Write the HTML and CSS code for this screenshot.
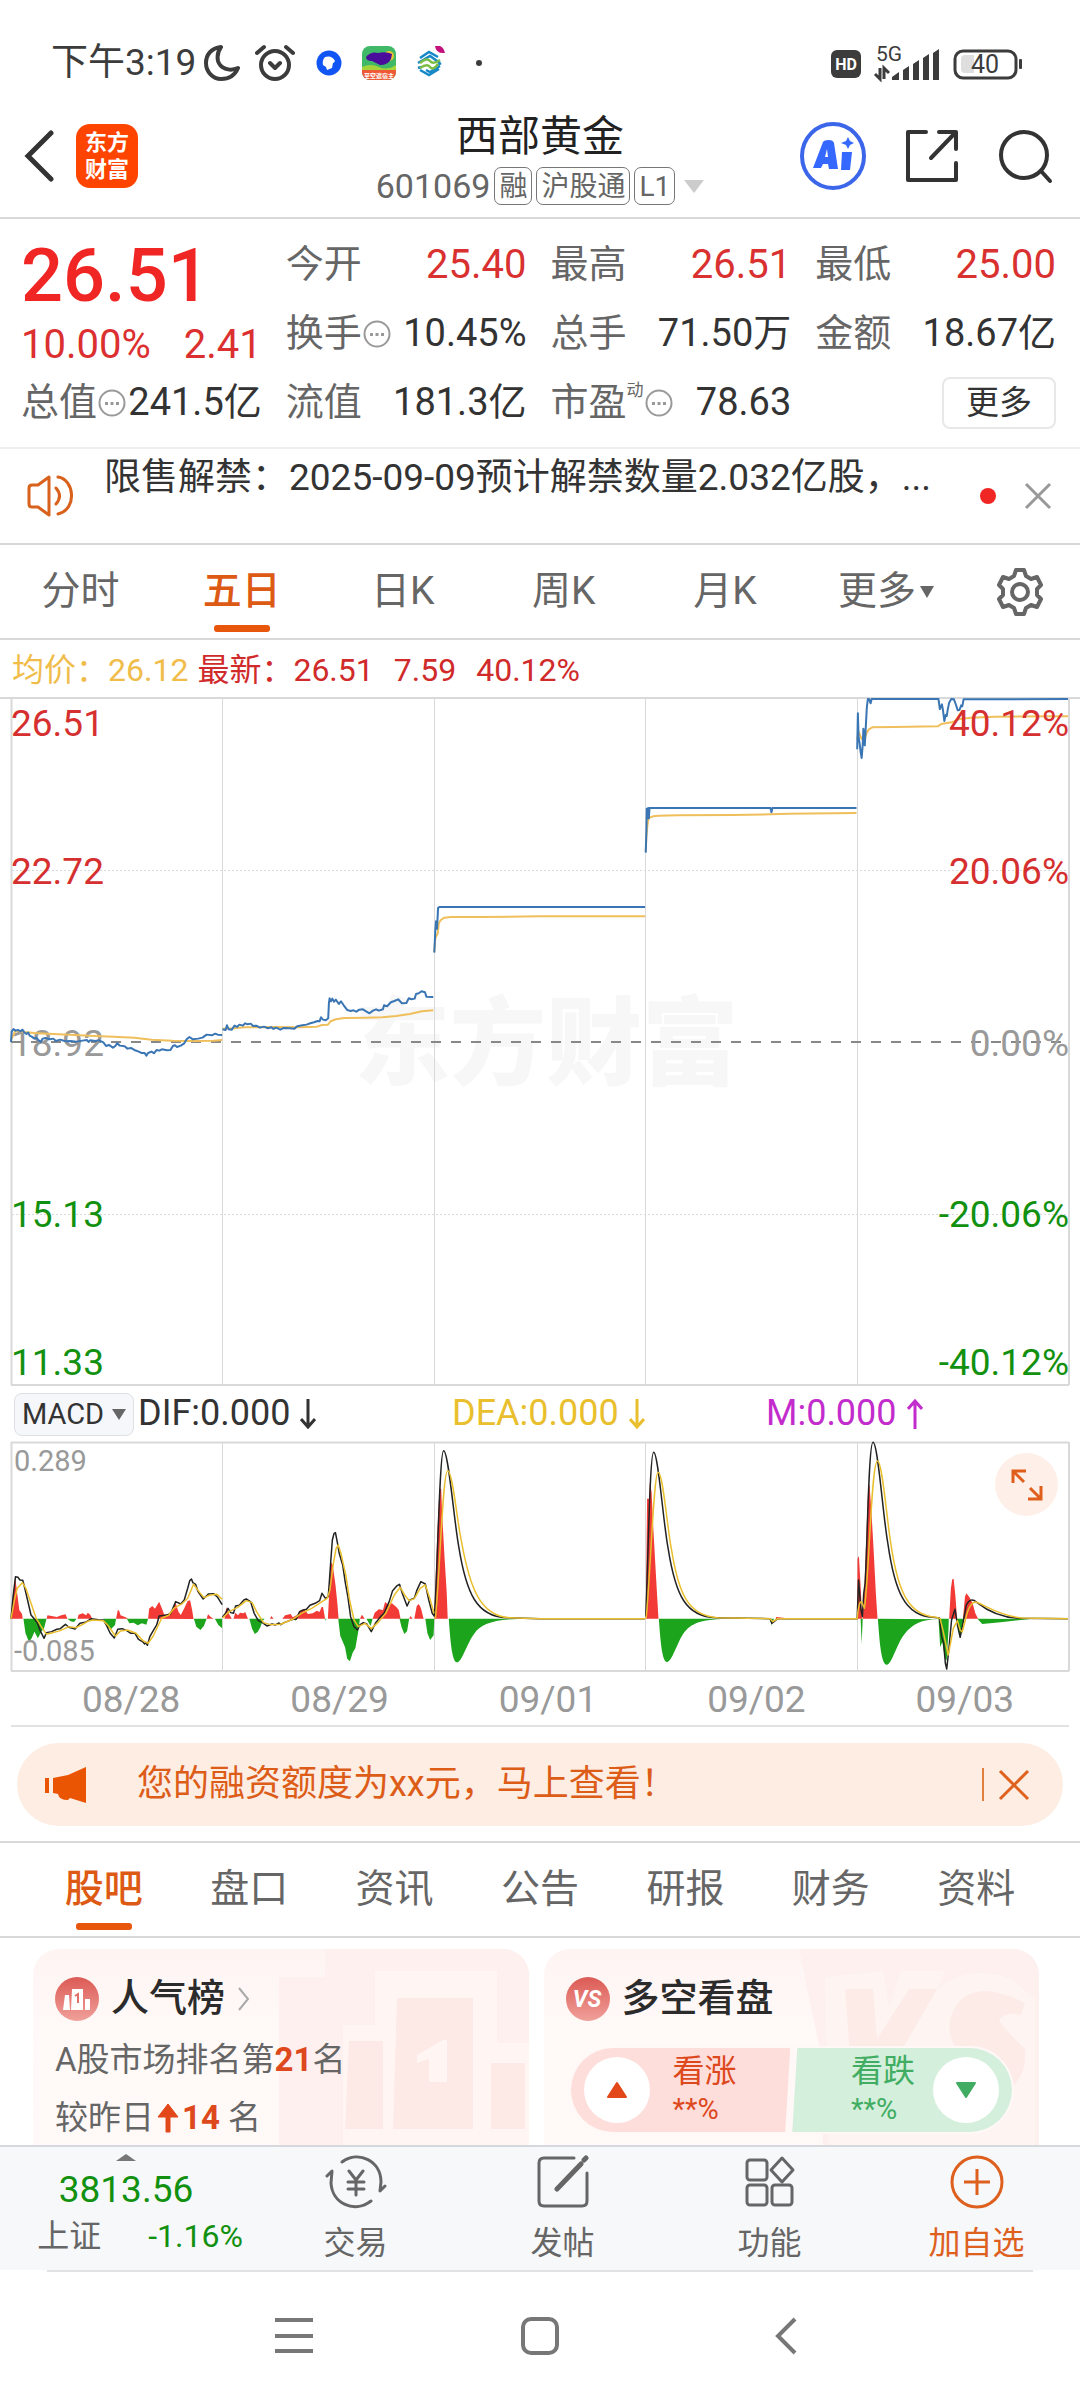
FILE: index.html
```html
<!DOCTYPE html>
<html lang="zh-CN">
<head>
<meta charset="utf-8">
<meta name="viewport" content="width=device-width, initial-scale=1">
<title>西部黄金 601069</title>
<link rel="stylesheet" href="styles.css">
</head>
<body>
<div class="app">
  <div class="status">
    <div class="status-left">
      <span class="clock">下午3:19</span>
      <svg width="36" height="38" viewBox="0 0 36 38"><path d="M17 3C7 4 2 11 2 19c0 9 7 16 15 16 8 0 14-4 17-11-9 4-18 0-20-7-1-5 0-10 3-14z" fill="none" stroke="#3c3c3c" stroke-width="4" stroke-linejoin="round"/></svg>
      <svg class="alarm" width="40" height="38" viewBox="0 0 40 38" fill="none" stroke="#3c3c3c" stroke-width="4" stroke-linecap="round" stroke-linejoin="round"><circle cx="20" cy="21" r="14"/><path d="M2 9l7-6M38 9l-7-6M15 19l5 5 5-5"/></svg>
      <svg class="app-icon" width="34" height="34" viewBox="0 0 34 34"><circle cx="17" cy="17" r="12.500" fill="#1155f5"/><path d="M13 11q7-2 10 4-1 2-2 2l-1 5-5 2-1-3-3-2q-1-5 2-8z" fill="#fff"/></svg>
      <svg class="app-icon" width="34" height="34" viewBox="0 0 34 34"><defs><clipPath id="game"><rect width="34" height="34" rx="8"/></clipPath></defs><g clip-path="url(#game)"><rect width="34" height="34" fill="#3fb868"/><path d="M0 21q9-4 17 0t17-2v6H0z" fill="#a4d33b"/><circle cx="27" cy="10" r="5" fill="#ecc431"/><path d="M4 11q5-6 12-4 8-2 14 1l-1 5q-3 6-11 6l-8-4q-6 0-6-4z" fill="#4a0c9b"/><rect y="24" width="34" height="10" fill="#ee5a35"/></g><text x="17" y="32" text-anchor="middle" font-size="6" font-weight="700" fill="#fff">至空遮宿主</text></svg>
      <svg class="app-icon" width="34" height="34" viewBox="0 0 34 34" fill="none" stroke-width="2.500"><path d="M8 12l9-6 9 5M6 17l12-7 10 7M6 22l3-1M29 17l-3 2M8 24l9 5 10-6M14 24l4 2 10-6" stroke="#1688c8"/><path d="M8 17q7-6 10-2t10-1M8 22q7-5 10-1t8-3" stroke="#7bbd45"/><path d="M23 0q8-2 10 7-9 1-10-7z" fill="#c4107b"/></svg>
      <svg class="app-icon" width="34" height="34" viewBox="0 0 34 34"><circle cx="17" cy="17" r="3" fill="#3c3c3c"/></svg>
    </div>
    <svg width="192" height="42" viewBox="831 41 192 42" role="img" aria-label="HD 5G 40%">
      <rect x="831" y="49" width="30" height="28" rx="6" fill="#3c3c3c"/>
      <text x="846" y="69" text-anchor="middle" font-size="16" font-weight="700" fill="#fff">HD</text>
      <text x="876" y="60" font-size="21" fill="#3c3c3c">5G</text>
      <path d="M880 67v11l-5-5M884 78V67l5 5" fill="none" stroke="#3c3c3c" stroke-width="3"/>
      <path d="M892 79v-3l7-5v8zM903 79V69l6-4v14zM913 79V63l6-4v20zM923 79V57l6-4v26zM933 79V52l6-4v31z" fill="#3c3c3c"/>
      <rect x="955" y="50" width="61" height="27" rx="8" fill="none" stroke="#3c3c3c" stroke-width="3"/>
      <path d="M965 54h9v18h-9q-4 0-4-4V58q0-4 4-4z" fill="#dedede"/>
      <rect x="1019" y="58" width="3" height="10" rx="1" fill="#3c3c3c"/>
      <text x="985" y="72" text-anchor="middle" font-size="25" fill="#3c3c3c">40</text>
    </svg>
  </div>

  <header class="header">
    <div class="header-side">
      <button class="plain" aria-label="返回"><svg width="30" height="52" viewBox="0 0 30 52"><path d="M27 3L4 26l23 23" fill="none" stroke="#333" stroke-width="5" stroke-linecap="round"/></svg></button>
      <a class="logo" href="#">东方<br>财富</a>
    </div>
    <div class="header-title">
      <h1>西部黄金</h1>
      <button class="plain code">601069<span class="tag">融</span><span class="tag">沪股通</span><span class="tag">L1</span><i class="caret"></i></button>
    </div>
    <div class="header-side header-actions">
      <button class="plain" aria-label="AI"><svg width="66" height="68" viewBox="0 0 66 68"><ellipse cx="33" cy="34" rx="31" ry="32" fill="none" stroke="#3c66ea" stroke-width="4"/><path d="M13 46l10-26q1-2 6-2 4 0 5 3l4 26h-9l-1-5h-5l-2 4zM25 35h3l-1-8z" fill="#3568ff" fill-rule="evenodd"/><path d="M42 30h10l-2 18h-9z" fill="#3568ff"/><path d="M48 15l2 4 4 2-4 2-2 4-2-4-5-2 5-2z" fill="#3568ff" /></svg></button>
      <button class="plain" aria-label="分享"><svg width="54" height="54" viewBox="0 0 54 54" fill="none" stroke="#333" stroke-width="4" stroke-linecap="round" stroke-linejoin="round"><path d="M21 3H3v48h48V34M34 3h17v17M51 3L26 29"/></svg></button>
      <button class="plain" aria-label="搜索"><svg width="56" height="56" viewBox="0 0 56 56" fill="none" stroke="#333" stroke-width="4" stroke-linecap="round"><circle cx="26" cy="27" r="23"/><path d="M43 43l9 10"/></svg></button>
    </div>
  </header>

  <section class="quote">
    <div class="price">
      <strong>26.51</strong>
      <div class="change"><span>10.00%</span><span>2.41</span></div>
    </div>
    <div class="pair"><span>今开</span><b class="up">25.40</b></div>
    <div class="pair"><span>最高</span><b class="up">26.51</b></div>
    <div class="pair"><span>最低</span><b class="up">25.00</b></div>
    <div class="pair"><span>换手<svg class="info"><use href="#i-dots"/></svg></span><b>10.45%</b></div>
    <div class="pair"><span>总手</span><b>71.50万</b></div>
    <div class="pair"><span>金额</span><b>18.67亿</b></div>
    <div class="pair"><span>总值<svg class="info"><use href="#i-dots"/></svg></span><b>241.5亿</b></div>
    <div class="pair"><span>流值</span><b>181.3亿</b></div>
    <div class="pair"><span>市盈<sup>动</sup><svg class="info"><use href="#i-dots"/></svg></span><b>78.63</b></div>
    <div class="pair pair-more"><button class="more">更多</button></div>
  </section>

  <section class="notice">
    <svg width="48" height="42" viewBox="0 0 48 42" fill="none" stroke="#d8611c" stroke-width="3" stroke-linecap="round" stroke-linejoin="round"><path d="M22 2L11 10H5q-3 0-3 3v16q0 3 3 3h6l11 8zM29 13q7 8 0 16M31 2c16 2 20 32 0 37"/></svg>
    <p>限售解禁：2025-09-09预计解禁数量2.032亿股，...</p>
    <i class="dot"></i>
    <button class="plain" aria-label="关闭"><svg width="28" height="28" viewBox="0 0 28 28"><path d="M2 2l24 24M26 2L2 26" stroke="#999" stroke-width="3"/></svg></button>
  </section>

  <nav class="periods">
    <button class="tab">分时</button>
    <button class="tab active">五日</button>
    <button class="tab">日K</button>
    <button class="tab">周K</button>
    <button class="tab">月K</button>
    <button class="tab">更多<i class="caret small"></i></button>
    <button class="tab" aria-label="设置"><svg width="48" height="50" viewBox="0 0 48 50" fill="none" stroke="#666" stroke-width="4" stroke-linejoin="round"><path d="M20 3h8l2 6 5 3 6-2 4 8-4 4v6l4 4-4 8-6-2-5 3-2 6h-8l-2-6-5-3-6 2-4-8 4-4v-6l-4-4 4-8 6 2 5-3z"/><circle cx="24" cy="25" r="8"/></svg></button>
  </nav>

  <div class="legend"><span class="avg">均价：26.12</span><span>最新：26.51</span><span>7.59</span><span>40.12%</span></div>

  <svg class="chart" viewBox="0 697 1080 690" role="img" aria-label="五日走势">
    <text class="watermark" x="546" y="1077" text-anchor="middle">东方财富</text>
    <g class="grid">
      <path d="M0 698H1080M11.500 697V1385M1069 697V1385M11 1385H1069" stroke-width="2"/>
      <path d="M222.500 699V1385M434.500 699V1385M645.500 699V1385M857.500 699V1385"/>
      <path d="M12 870.500H1068M12 1214.500H1068" stroke-dasharray="2 2"/>
    </g>
    <path d="M11 1042H1069" stroke="#888" stroke-width="2" stroke-dasharray="10 10"/>
    <g class="labels">
      <text x="11" y="736" class="t-up">26.51</text><text x="11" y="884" class="t-up">22.72</text><text x="11" y="1056" class="t-flat">18.92</text><text x="11" y="1227" class="t-down">15.13</text><text x="11" y="1375" class="t-down">11.33</text>
    </g>
    <g transform="translate(0 690) scale(.3444 .3333)">
      <g class="line-avg">
        <polyline points="32,1050 45,1022 70,1026 100,1029 140,1031 200,1034 260,1037 330,1040 390,1043 440,1049 500,1052 560,1053 620,1052 645,1050"/>
        <polyline points="646,1016 680,1015 710,1012 740,1012 800,1011 870,1012 920,1010 935,1005 952,1004 960,994 975,988 1000,984 1060,983 1110,982 1150,978 1190,972 1225,964 1258,961"/>
        <polyline points="1261,786 1264,745 1271,730 1274,700 1280,690 1290,683 1310,681 1400,681 1568,679 1873,679"/>
      </g>
      <g class="line-price">
        <polyline points="32,1056 34,1025 39,1017 45,1022 52,1020 60,1024 65,1019 70,1027 77,1032 82,1028 86,1037 92,1040 100,1046 105,1043 112,1051 118,1056 124,1046 132,1044 145,1048 155,1046 162,1053 175,1049 190,1054 205,1053 222,1055 240,1052 252,1050 257,1056 262,1051 276,1053 288,1051 300,1057 308,1068 316,1065 328,1073 335,1068 340,1060 348,1067 362,1069 370,1076 380,1074 390,1080 403,1085 410,1089 420,1089 425,1097 430,1089 440,1085 447,1090 455,1080 463,1082 470,1078 485,1081 495,1080 502,1068 508,1066 514,1071 525,1067 535,1060 542,1048 550,1041 560,1048 575,1046 588,1043 600,1034 615,1036 625,1031 632,1034 645,1035"/>
        <polyline points="646,1018 655,1020 659,1006 664,1018 673,1019 681,1007 688,1011 695,1004 705,1007 712,1000 719,1003 728,1001 735,1008 744,1007 755,1013 766,1010 778,1015 788,1012 794,1017 802,1013 814,1019 824,1014 840,1015 855,1016 863,1009 878,1006 890,1004 901,1000 912,997 922,993 928,994 932,982 938,989 946,991 953,985 955,940 957,925 961,934 965,926 970,935 975,929 984,942 990,934 998,946 1008,960 1018,963 1026,961 1035,965 1043,959 1054,958 1063,964 1073,970 1083,962 1092,958 1100,962 1112,958 1115,946 1124,949 1135,937 1145,933 1156,928 1167,940 1180,939 1187,925 1195,928 1204,926 1208,912 1216,910 1224,904 1234,907 1238,920 1258,921"/>
        <polyline points="1261,788 1264,720 1266,694 1269,716 1272,654 1277,651 1873,651"/>
      </g>
    </g>
    <g transform="translate(540 690) scale(.3444 .3333)">
      <g class="line-avg">
        <polyline points="307,485 309,440 312,405 315,384 328,379 345,377 400,376 560,375 670,373 720,371 919,369"/>
        <polyline points="921,150 925,125 933,145 941,152 948,130 955,118 965,112 1030,111 1155,109 1165,102 1195,97 1215,88 1250,83 1320,80 1533,79"/>
      </g>
      <g class="line-price">
        <polyline points="307,488 309,420 310,356 312,385 314,354 316,385 318,354 669,354 672,367 675,354 919,354"/>
        <polyline points="921,178 923,70 925,140 928,160 931,186 934,204 937,165 939,116 943,166 946,110 949,52 952,27 956,28 960,40 963,27 1157,27 1161,57 1167,43 1170,60 1174,93 1178,75 1181,78 1184,58 1188,38 1194,27 1202,28 1208,45 1213,61 1218,60 1223,46 1226,49 1230,28 1533,27"/>
      </g>
    </g>
    <g class="labels" text-anchor="end">
      <text x="1069" y="736" class="t-up">40.12%</text><text x="1069" y="884" class="t-up">20.06%</text><text x="1069" y="1056" class="t-flat">0.00%</text><text x="1069" y="1227" class="t-down">-20.06%</text><text x="1069" y="1375" class="t-down">-40.12%</text>
    </g>
  </svg>

  <div class="macd-bar">
    <button class="macd-select">MACD<i class="caret dark"></i></button>
    <span>DIF:0.000<svg class="arr"><use href="#i-down"/></svg></span>
    <span class="dea">DEA:0.000<svg class="arr"><use href="#i-down"/></svg></span>
    <span class="m">M:0.000<svg class="arr"><use href="#i-up"/></svg></span>
  </div>

  <div class="macd">
    <svg class="chart" viewBox="0 1441 1080 231" role="img" aria-label="MACD">
      <g class="grid">
        <path d="M11 1442.500H1069M11.500 1442V1671M1069 1442V1671M11 1671H1069" stroke-width="2"/>
        <path d="M222.500 1442V1671M434.500 1442V1671M645.500 1442V1671M857.500 1442V1671"/>
      </g>
      <g transform="translate(0 1350) scale(.3444 .3333)">
        <path class="bar-up" d="M32 806L38 740 44 680 50 730 56 780 64 792 66 806zM135 806l3-10 12 2 15 3 13-5 12-3 6 13zM225 806l3-12 12-4 10 6 5-8 7 6 6 12zM337 806l5-26 4 2 4 14 15 6 7 4zM430 806l3-30 9-8 8 8 12-21 8 20 6 17 9 4 15-16 10-22 8 27 7 10 10-20 10-22 7-2 6 30 4 26zM600 806l4-13 8 8 8 5zM652 806l5-34 8 20 8 14zM678 806l5-18 8 8 6-8 10 2 5-4 8 20zM784 806l4-8 6 8zM820 806l8-10 16-4 6 10 14-8 8-12 12-4 10 14 14-2 12-8 8 4 6-16 4 2 6 34zM952 806l6-120 2-50 6 8 8 60 6 60 3 42zM1045 806l6-12 8 12zM1082 806l6-18 12-10 12 2 6-24 10 8 10-4 12 10 8 10 5 26zM1188 806l4-8 6 8zM1203 806l7-38 6-6 6 12 8 32zM1261 806l8-240 7-150 5 0 3 80 7 130 6 100 3 80z"/>
        <path class="bar-down" d="M68 806l6 44 10 25 8-10 8-20 10 20 10-20 8-10 7-29zM196 806l9 8 10 2 7-10zM300 806l12 26 10 6 12-13 3-19zM368 806l8 14 12-2 12 8 12-6 13 4 5-18zM563 806l7 24 12 10 10-12 8-22zM624 806l10 19 11 10V806zM724 806l8 30 8 16 8-6 8-14 6-18 6-8zM854 806l4 6 4-6zM944 806l2 6 2-6zM982 806l6 52 6 14 8 20 6 34 8 8 8-26 8-14 8-48 5-40zM1064 806l12 22 6-22zM1160 806l6 26 8 20 8-8 6-38zM1235 806l6 44 8 20 10-14 2-50zM1303 806c4 50 8 130 24 131 14 0 30-60 50-86 20-30 60-45 160-45z"/>
        <g class="line-dif">
          <polyline points="32,806 38,740 45,680 52,682 58,690 66,691 72,715 80,750 90,795 98,805 108,818 118,845 128,865 135,848 150,845 165,838 175,836 190,823 200,832 218,837 232,820 248,817 265,806 285,809 300,810 310,828 320,850 332,864 342,838 355,836 368,842 380,850 392,850 402,868 415,876 420,882 424,878 428,886 435,860 445,842 455,825 462,798 480,796 495,792 510,755 525,762 535,750 545,715 551,692 556,687 560,698 568,703 575,725 590,747 605,732 620,731 632,742 645,764"/>
          <polyline points="646,802 656,788 662,775 670,788 678,790 684,768 695,766 708,750 715,747 728,756 738,790 750,812 762,818 775,828 790,822 800,825 810,819 815,824 825,818 840,812 850,808 860,808 870,785 880,780 890,778 900,766 915,760 928,752 935,730 945,745 953,740 956,700 960,640 965,570 970,550 974,548 980,580 985,610 995,645 1003,700 1010,740 1018,800 1028,830 1038,840 1045,825 1055,818 1065,822 1078,845 1090,820 1105,800 1115,790 1130,755 1140,722 1152,708 1160,703 1168,730 1182,768 1190,750 1203,745 1210,722 1222,695 1235,702 1245,750 1255,790 1261,798"/>
          <path d="M1261 800C1270 690 1276 302 1288 302 1302 302 1318 510 1332 590 1354 732 1385 800 1470 803L1568 806H1873"/>
        </g>
        <g class="line-dea">
          <polyline points="32,806 42,750 50,715 65,698 75,715 90,760 105,805 120,830 135,853 150,849 175,842 200,830 220,833 235,826 255,814 270,810 300,812 315,828 335,858 350,843 370,840 395,850 415,872 430,880 445,858 460,825 470,804 490,796 505,775 530,760 545,745 562,703 580,728 592,743 610,735 630,733 645,748"/>
          <polyline points="646,804 665,785 690,772 715,752 732,758 745,785 765,818 785,824 815,823 850,808 875,790 905,775 935,755 950,745 958,720 968,640 976,595 982,585 990,610 1005,680 1015,750 1028,810 1040,830 1060,820 1078,836 1100,815 1120,790 1145,735 1162,712 1175,735 1188,752 1203,746 1220,715 1235,705 1248,745 1260,790"/>
          <path d="M1264 806C1276 700 1285 362 1300 362 1314 362 1328 520 1340 575 1362 700 1390 800 1480 803L1568 806H1873"/>
        </g>
      </g>
      <g transform="translate(540 1350) scale(.3444 .3333)">
        <path class="bar-up" d="M307 806l4-360 6 0 2-46 5 26 4 90 7 130 5 90 4 70zM684 806l2-5 20 2 20 3zM921 806l1-180 4-8 6 110 3 78zM937 806l4-70 6-160 6-170 4 0 6 90 6 110 6 120 5 80zM1188 806l5-90 4-28 4-2 5 50 5 70zM1228 806l6-66 4-10 8 10 10 20 8 30 8 16z"/>
        <path class="bar-down" d="M345 806c4 50 8 130 24 130 14 0 30-60 48-86 20-30 50-44 140-44zM669 806l3 22 3-14 5-8zM931 806l3 76 3-76zM981 806c4 50 8 138 26 138 14 0 30-65 50-90 25-32 50-46 100-46zM1157 806l5 86 6-16 8 50 5 5 5-90 1-35zM1210 806l8 52 6-8 6-44zM1270 806l14 16 60-6 80-9z"/>
        <g class="line-dif">
          <path d="M307 800C313 680 318 307 330 307 343 307 358 520 372 595 394 740 425 800 510 803L668 806 673 820 690 806 921 806 925 690 932 780 936 800 940 730 944 700C950 600 954 277 967 277 981 277 996 500 1010 580 1030 725 1060 797 1140 802L1160 804 1166 860 1172 880 1177 940 1181 957 1187 900 1195 810 1205 778 1213 830 1220 862 1228 820 1238 765Q1250 740 1268 757C1290 775 1330 802 1390 805L1533 806"/>
        </g>
        <g class="line-dea">
          <path d="M308 806C320 690 330 367 343 367 357 367 370 540 382 600 402 730 430 798 515 803L668 806 676 815 690 806 921 806Q926 750 934 756L942 775C955 690 962 333 980 333 994 333 1008 520 1020 590 1040 725 1070 797 1150 802L1162 806 1172 850 1180 890 1185 915 1192 880 1200 835 1212 812 1220 840 1226 846 1240 790Q1252 752 1268 757C1290 765 1340 800 1400 804L1533 806"/>
        </g>
      </g>
      <g class="scale"><text x="14" y="1471">0.289</text><text x="14" y="1661">-0.085</text></g>
    </svg>
    <button class="expand" aria-label="全屏"><svg width="32" height="32" viewBox="0 0 32 32" fill="none" stroke="#e05f1c" stroke-width="3"><path d="M13 13L2 2M2 14V2h13M19 19l11 11M30 17v13H17"/></svg></button>
  </div>

  <div class="dates"><span>08/28</span><span>08/29</span><span>09/01</span><span>09/02</span><span>09/03</span></div>

  <aside class="promo">
    <svg width="44" height="38" viewBox="0 0 44 38" fill="#ea5504"><path d="M1 12h4v15H1zM9 12l15-3L42 1v36l-16-5-2 2q-9 0-10-6l-5-1z"/></svg>
    <a href="#">您的融资额度为xx元，马上查看！</a>
    <i class="sep"></i>
    <button class="plain" aria-label="关闭"><svg width="32" height="32" viewBox="0 0 32 32"><path d="M2 2l28 28M30 2L2 30" stroke="#e0601d" stroke-width="3"/></svg></button>
  </aside>

  <nav class="sections">
    <button class="tab active">股吧</button>
    <button class="tab">盘口</button>
    <button class="tab">资讯</button>
    <button class="tab">公告</button>
    <button class="tab">研报</button>
    <button class="tab">财务</button>
    <button class="tab">资料</button>
  </nav>

  <main class="cards">
    <article class="card">
      <svg class="art" width="260" height="196" viewBox="0 0 260 196"><path d="M56 0H260V196H10V28H56z" fill="#fdf0ee"/><path d="M106 22H228V94H260V196H74V76H106z" fill="#fff8f7" opacity=".7"/><path d="M128 49H204V180H124zM80 92H114V180H76zM222 114H256V180H222z" fill="#fde9e6"/><path d="M148 106l26-15h4v42H160V110l-12 4z" fill="#fff6f4"/></svg>
      <h2><svg width="44" height="44" viewBox="0 0 44 44"><circle cx="22" cy="22" r="22" fill="url(#g-red)"/><path d="M17 12h11v21H16zM10 18h4l1 15H8zM30 22h5v11h-5z" fill="#fff"/><path d="M20 19l3-2v9" fill="none" stroke="#e2706a" stroke-width="2"/></svg><span>人气榜</span><svg width="14" height="26" viewBox="0 0 14 26"><path d="M2 2l9 11-9 11" fill="none" stroke="#aaa" stroke-width="2"/></svg></h2>
      <p>A股市场排名第<b>21</b>名</p>
      <p>较昨日<svg width="24" height="30" viewBox="0 0 24 30"><path d="M12 1l10 13h-8v15h-4V14H2z" fill="#e2481a" stroke="#e2481a"/></svg><b>14</b> 名</p>
    </article>
    <article class="card">
      <svg class="art" width="260" height="196" viewBox="0 0 260 196"><path d="M20 0H260V196H44L40 96z" fill="#fdf0ee"/><path d="M46 28L104 22 110 60 122 22H166L158 40Q190 14 232 30L256 50V196H50z" fill="#fff8f7" opacity=".6"/><path d="M66 40H94L98 90 130 40H158L112 120H72zM246 54q-50-26-70 4-16 32 14 52 10 18-22 10l-14 30 50 4q46-14 42-54-20-20-26-28 6-10 22-6z" fill="#fdebe8"/></svg>
      <h2><svg width="44" height="44" viewBox="0 0 44 44"><circle cx="22" cy="22" r="22" fill="url(#g-red)"/><text x="21" y="30" text-anchor="middle" font-size="23" font-weight="700" font-style="italic" fill="#fff">VS</text></svg><span>多空看盘</span></h2>
      <div class="vote">
        <button class="bull"><i><svg width="22" height="18" viewBox="0 0 22 18"><path d="M11 2l9 14H2z" fill="#e2481a" stroke="#e2481a" stroke-width="2" stroke-linejoin="round"/></svg></i><span>看涨<small>**%</small></span></button>
        <button class="bear"><span>看跌<small>**%</small></span><i><svg width="22" height="18" viewBox="0 0 22 18"><path d="M11 16L20 2H2z" fill="#41ad62" stroke="#41ad62" stroke-width="2" stroke-linejoin="round"/></svg></i></button>
      </div>
    </article>
  </main>

  <footer class="toolbar">
    <button class="index"><i class="caret flip"></i><b>3813.56</b><span>上证<em>-1.16%</em></span></button>
    <button class="tool"><svg width="62" height="54" viewBox="0 0 62 54" fill="none" stroke="#666" stroke-width="3" stroke-linecap="round" stroke-linejoin="round"><path d="M17 7C34-5 56 6 56 27l-1 9 5-5M46 46C29 59 7 48 6 28l1-12-5 5M24 16l7 9 7-9M31 25v15M23 27h16M23 34h16"/></svg>交易</button>
    <button class="tool"><svg width="54" height="54" viewBox="0 0 54 54" fill="none" stroke="#666" stroke-width="3" stroke-linecap="round" stroke-linejoin="round"><path d="M38 3H8Q3 3 3 8v38q0 5 5 5h38q5 0 5-5V18"/><path d="M21 34L45 9M48 5l2-2" stroke-width="5"/></svg>发帖</button>
    <button class="tool"><svg width="54" height="54" viewBox="0 0 54 54" fill="none" stroke="#666" stroke-width="3" stroke-linejoin="round"><rect x="4" y="5" width="20" height="20" rx="3"/><rect x="4" y="30" width="20" height="20" rx="3"/><rect x="29" y="30" width="20" height="20" rx="3"/><path d="M39 3l11 12-11 12-11-12z"/></svg>功能</button>
    <button class="tool add"><svg width="54" height="54" viewBox="0 0 54 54" fill="none" stroke="#dd601f" stroke-width="3"><circle cx="27" cy="27" r="25"/><path d="M27 14v26M14 27h26"/></svg>加自选</button>
  </footer>

  <nav class="system">
    <button class="plain" aria-label="最近任务"><svg width="38" height="38" viewBox="0 0 38 38"><path d="M0 3h38M0 19h38M0 34h38" stroke="#777" stroke-width="4"/></svg></button>
    <button class="plain" aria-label="主页"><svg width="38" height="38" viewBox="0 0 38 38"><rect x="2" y="2" width="34" height="34" rx="8" fill="none" stroke="#777" stroke-width="4"/></svg></button>
    <button class="plain" aria-label="返回"><svg width="38" height="38" viewBox="0 0 38 38"><path d="M28 2L11 19l17 17" fill="none" stroke="#777" stroke-width="4"/></svg></button>
  </nav>
</div>

<svg class="defs" aria-hidden="true">
  <linearGradient id="g-red" x2="0" y2="1"><stop stop-color="#dc5a55"/><stop offset="1" stop-color="#f0a09a"/></linearGradient>
  <symbol id="i-dots" viewBox="0 0 28 28"><circle cx="14" cy="14" r="12.500" fill="none" stroke="#999" stroke-width="2"/><path d="M7 13h3v3H7zM12.500 13h3v3h-3zM18 13h3v3h-3z" fill="#999"/></symbol>
  <symbol id="i-down" viewBox="0 0 16 30"><path d="M8 0v28M1 20l7 8 7-8" fill="none" stroke="currentColor" stroke-width="3"/></symbol>
  <symbol id="i-up" viewBox="0 0 16 30"><path d="M8 30V2M1 10l7-8 7 8" fill="none" stroke="currentColor" stroke-width="3"/></symbol>
</svg>
</body>
</html>
```
FILE: styles.css
```css
* { box-sizing: border-box; }
body { margin: 0; background: #fff; color: #333; font-family: Roboto, "Noto Sans CJK SC", sans-serif; line-height: 1.2; }
button { font: inherit; color: inherit; border: 0; background: none; padding: 0; }
a { color: inherit; text-decoration: none; }
h1, h2, p { margin: 0; font-weight: 400; }
b, em, i { font-style: normal; font-weight: 400; }
svg { display: block; flex: none; }
.plain { display: flex; align-items: center; }
.defs { position: absolute; width: 0; height: 0; }
.app { display: flex; flex-direction: column; min-height: 1800px; height: 100vh; overflow: hidden; }
.app > * { flex: none; }

.status { display: flex; justify-content: space-between; align-items: center; padding: 38px 57px 0 51px; height: 88px; }
.status-left { display: flex; align-items: center; gap: 15px; }
.clock { font-size: 37px; line-height: 50px; color: #3c3c3c; margin-right: -7px; }
.alarm { margin-right: 2px; }
.app-icon { margin-right: 1px; }

.header { display: grid; grid-template-columns: 1fr auto 1fr; align-items: center; height: 131px; border-bottom: 2px solid #d8d8d8; }
.header-side { display: flex; align-items: center; gap: 22px; padding: 7px 24px 0; }
.header-actions { justify-content: flex-end; gap: 39px; padding-right: 26px; }
.logo { width: 62px; height: 64px; padding-top: 5px; border-radius: 14px; background: #ff4400; color: #fff; font-size: 22px; line-height: 27px; font-weight: 700; text-align: center; }
.header-title { display: flex; flex-direction: column; align-items: center; padding-top: 7px; }
h1 { font-size: 42px; line-height: 60px; color: #222; }
.code { gap: 4px; font-size: 34px; line-height: 38px; color: #666; }
.tag { border: 1px solid #777; border-radius: 7px; height: 38px; line-height: 37px; padding: 0 4px; font-size: 28px; }
.caret { display: inline-block; border: 10px solid transparent; border-top: 13px solid #ccc; border-bottom: 0; margin-left: 5px; }
.caret.small { border-width: 12px 7px 0; border-top-color: #666; margin-left: 4px; }
.caret.dark { border-width: 11px 7px 0; border-top-color: #666; margin-left: 0; }
.caret.flip { border-width: 0 10px 7px; border-bottom: 7px solid #777; margin: 0; }

.quote { display: grid; grid-template-columns: repeat(4, 1fr); grid-auto-rows: 69px; column-gap: 24px; padding: 11px 24px 10px 21px; border-bottom: 2px solid #eee; }
.price { grid-row: span 2; display: flex; flex-direction: column; color: #f02624; }
.price strong { font-size: 74px; line-height: 92px; font-weight: 500; }
.change { display: flex; justify-content: space-between; font-size: 40px; line-height: 46px; color: #dc2f2f; }
.pair { display: flex; align-items: center; justify-content: space-between; white-space: nowrap; }
.pair span { display: flex; align-items: center; font-size: 38px; color: #666; }
.pair b { font-size: 38px; }
.pair .up { font-size: 40px; color: #d93030; }
.pair sup { font-size: 17px; line-height: 20px; align-self: flex-start; }
.info { width: 28px; height: 28px; margin-left: 1px; }
.pair-more { justify-content: flex-end; }
.more { width: 114px; height: 52px; border: 2px solid #e8e8e8; border-radius: 8px; font-size: 33px; line-height: 46px; }

.notice { display: flex; align-items: center; height: 96px; padding: 0 28px 0 27px; border-bottom: 2px solid #d8d8d8; }
.notice p { flex: 1; align-self: flex-start; margin-left: 29px; font-size: 37px; line-height: 58px; white-space: nowrap; overflow: hidden; }
.dot { width: 16px; height: 16px; border-radius: 8px; background: #f02624; margin: 0 28px; }

.tab { position: relative; display: flex; align-items: center; justify-content: center; font-size: 39px; color: #666; }
.tab.active { color: #dd5a14; }
.tab.active::after { content: ""; position: absolute; bottom: 6px; left: calc(50% - 28px); width: 56px; height: 7px; border-radius: 3px; background: #e8560c; }
.periods { display: grid; grid-template-columns: repeat(6, 3fr) 2fr; height: 95px; padding-right: 6px; border-bottom: 2px solid #d8d8d8; }
.periods .tab.active { font-weight: 500; }
.legend { display: flex; gap: 20px; padding-left: 12px; height: 57px; line-height: 60px; font-size: 32px; color: #d02a2a; }
.avg { color: #f0bc4a; margin-right: -11px; }

.chart { width: 100%; height: auto; }
.chart polyline, .line-dif path, .line-dea path { fill: none; vector-effect: non-scaling-stroke; stroke-linejoin: round; }
.grid { fill: none; stroke: #d9d9d9; }
.watermark { font-size: 96px; font-weight: 900; fill: #f7f7f7; }
.labels { font-size: 37px; }
.t-up { fill: #d5302f; }
.t-flat { fill: #999; }
.t-down { fill: #12900f; }
.line-avg { stroke: #efbf5c; stroke-width: 2px; }
.line-price { stroke: #3a75b4; stroke-width: 2px; }
.line-dif { stroke: #222; stroke-width: 1.5px; }
.line-dea { stroke: #e9bf2e; stroke-width: 1.5px; }
.bar-up { fill: #f23a36; }
.bar-down { fill: #1ca51c; }
.scale { font-size: 29px; fill: #999; }

.macd-bar { display: flex; align-items: center; height: 54px; padding-left: 14px; font-size: 36px; }
.macd-bar span { flex: 1; display: flex; align-items: center; gap: 10px; }
.macd-select { display: flex; align-items: center; justify-content: center; gap: 8px; width: 120px; height: 43px; margin-right: 4px; border: 1px solid #dfe0e4; border-radius: 8px; background: #f6f7fa; font-size: 29px; }
.macd-bar .dea { color: #e9bf2e; }
.macd-bar .m { color: #c32ccc; }
.arr { width: 16px; height: 30px; }
.macd { position: relative; }
.expand { position: absolute; right: 22px; top: 12px; width: 63px; height: 63px; border-radius: 50%; background: #fef0e9; display: flex; align-items: center; justify-content: center; }
.dates { display: grid; grid-template-columns: repeat(5, 1fr); margin: 0 11px; padding-left: 16px; height: 55px; line-height: 55px; font-size: 37px; color: #999; text-align: center; border-bottom: 2px solid #e2e2e2; }

.promo { display: flex; align-items: center; margin: 16px 17px 15px; padding: 0 33px 0 27px; height: 83px; border-radius: 42px; background: #fdede3; color: #dc5c18; font-size: 36px; }
.promo a { flex: 1; margin-left: 49px; }
.sep { width: 2px; height: 33px; background: #e0803f; margin-right: 14px; }
.sections { display: grid; grid-template-columns: repeat(7, 1fr); height: 97px; padding: 0 31px; border-top: 2px solid #d8d8d8; border-bottom: 2px solid #d8d8d8; }
.sections .tab.active { font-weight: 500; }

.app > .cards { flex: 1 1 0; min-height: 0; overflow: hidden; display: grid; grid-template-columns: 1fr 1fr; gap: 15px; padding: 11px 41px 0 33px; }
.card { position: relative; height: 260px; padding: 22px 22px 0; border-radius: 26px; background: linear-gradient(#fef5f3, #fffaf8 40%, #fef8f6); overflow: hidden; }
.card > * { position: relative; }
.card > .art { position: absolute; right: 0; top: 0; }
h2 { display: flex; align-items: center; gap: 12px; height: 56px; font-size: 38px; font-weight: 500; color: #2b2b2b; }
.card p { display: flex; align-items: center; margin-top: 8px; height: 50px; font-size: 33px; color: #666; white-space: pre; }
.card p svg { margin: 0 2px; }
.card p b { color: #dd481d; font-weight: 700; }
.vote { display: flex; gap: 2px; margin: 19px 3px 0; padding: 2px; height: 88px; border-radius: 44px; background: #fff8f7; overflow: hidden; }
.vote button { flex: 1; display: flex; align-items: center; text-align: left; font-size: 32px; line-height: 38px; }
.vote span { display: flex; flex-direction: column; }
.vote small { font-size: 29px; line-height: 38px; }
.vote i { width: 66px; height: 66px; border-radius: 50%; background: #fff; display: flex; align-items: center; justify-content: center; }
.bull { gap: 23px; padding-left: 13px; border-radius: 42px 0 0 42px; background: #fddedb; color: #dd481d; clip-path: polygon(0 0, 100% 0, calc(100% - 5px) 100%, 0 100%); }
.bear { gap: 18px; justify-content: flex-end; padding-right: 13px; border-radius: 0 42px 42px 0; background: #d4efdc; color: #41ad62; clip-path: polygon(5px 0, 100% 0, 100% 100%, 0 100%); }

.toolbar { display: grid; grid-template-columns: 252fr repeat(4, 207fr); height: 125px; border-top: 2px solid #d5d8dc; background: #f7f8fa; color: #666; font-size: 32px; }
.index { display: flex; flex-direction: column; align-items: center; padding-top: 7px; }
.index b { font-size: 37px; line-height: 50px; margin-top: 4px; color: #12900f; }
.index span { display: flex; gap: 47px; margin-left: 28px; line-height: 42px; }
.index em { color: #12900f; }
.tool { display: flex; flex-direction: column; align-items: center; gap: 9px; padding-top: 8px; line-height: 50px; }
.tool.add { color: #dd601f; }
.system { display: flex; justify-content: center; gap: 208px; height: 130px; margin: 0 47px; padding: 45px 0 0; border-top: 2px solid #e2e2e2; align-items: flex-start; }
```
